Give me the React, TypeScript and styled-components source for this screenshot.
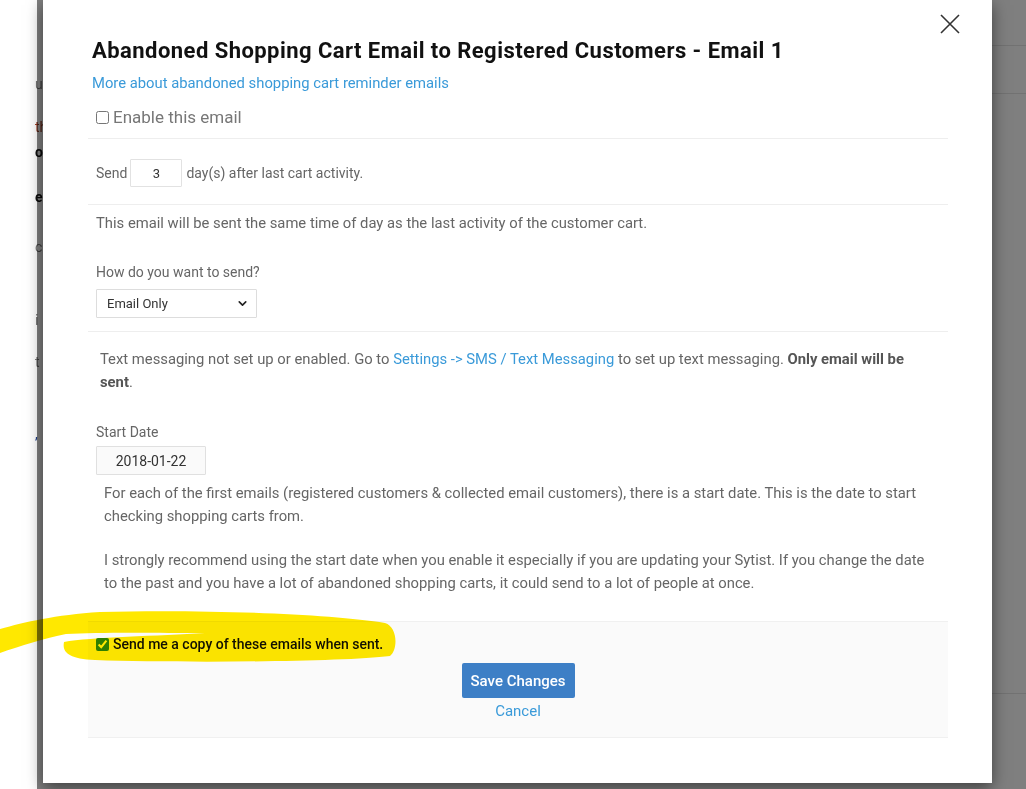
import React from "react";
import styled, { createGlobalStyle } from "styled-components";
import { ChevronDown } from "lucide-react";

const Global = createGlobalStyle`
  html, body { margin: 0; padding: 0; background: #fff; }
  body { font-family: Roboto, "Liberation Sans", Arial, sans-serif; }
  * { box-sizing: border-box; }
`;

const Root = styled.div`
  position: relative;
  width: 1026px;
  height: 789px;
  overflow: hidden;
  background: #fff;
`;

const BehindPage = styled.div`
  display: flex;
  flex-direction: column;
  width: 100%;
  height: 100%;
`;

const BehindLine = styled.div<{ $h: number; $rule?: boolean }>`
  position: relative;
  height: ${(p) => p.$h}px;
  display: flex;
  align-items: flex-end;
  padding-left: 35px;
  font-size: 14px;
  line-height: 20px;
  color: #777;
  &::after {
    content: "";
    display: ${(p) => (p.$rule ? "block" : "none")};
    position: absolute;
    left: 960px;
    right: 0;
    bottom: 0;
    height: 1px;
    background: #e4e4e4;
  }
`;

const Frag = styled.span<{ $tone?: "red" | "bold" | "gray" | "blue" }>`
  color: ${(p) =>
    p.$tone === "red" ? "#9a3b22" : p.$tone === "bold" ? "#111" : p.$tone === "blue" ? "#1f3f8a" : "#777"};
  font-weight: ${(p) => (p.$tone === "bold" ? 700 : 400)};
`;

const Overlay = styled.div`
  position: absolute;
  left: 37px;
  top: 0;
  right: 0;
  bottom: 0;
  background: rgba(0, 0, 0, 0.5);
`;

const Modal = styled.div`
  position: absolute;
  left: 43px;
  top: 0;
  width: 949px;
  height: 783px;
  background: #fff;
  box-shadow: 0 5px 15px rgba(0, 0, 0, 0.5);
  padding: 37px 44px 0 45px;
  display: flex;
  flex-direction: column;
`;

const Close = styled.button`
  position: absolute;
  top: 13px;
  right: 31px;
  width: 22px;
  height: 22px;
  padding: 0;
  border: 0;
  background: transparent;
  display: flex;
  align-items: center;
  justify-content: center;
`;

const Title = styled.h1`
  margin: 0 0 0 4px;
  font-size: 22px;
  line-height: 28px;
  font-weight: 700;
  letter-spacing: 0.45px;
  color: #111;
`;

const Link = styled.a`
  color: #3a9ad9;
  text-decoration: none;
`;

const HeaderLink = styled(Link)`
  display: block;
  margin: 8px 0 0 4px;
  font-size: 14.8px;
  line-height: 20px;
`;

const EnableRow = styled.label`
  display: flex;
  align-items: center;
  gap: 4px;
  padding: 12px 0 9px 8px;
  border-bottom: 1px solid #eee;
  font-size: 17px;
  line-height: 24px;
  color: #777;
`;

const Check = styled.input`
  width: 13px;
  height: 13px;
  margin: 0;
  accent-color: #2f8c12;
`;

const Section = styled.div<{ $pt: number; $pb: number; $rule?: boolean }>`
  padding: ${(p) => p.$pt}px 0 ${(p) => p.$pb}px 8px;
  border-bottom: ${(p) => (p.$rule ? "1px solid #eee" : "none")};
  display: flex;
  flex-direction: column;
  align-items: flex-start;
`;

const InlineRow = styled.div`
  display: flex;
  align-items: center;
  font-size: 14px;
  color: #666;
`;

const DaysInput = styled.input`
  width: 52px;
  height: 28px;
  margin: 0 4px 0 3px;
  border: 1px solid #e2e2e2;
  border-radius: 1px;
  text-align: center;
  font-family: Roboto, sans-serif;
  font-size: 13px;
  color: #333;
  background: #fff;
  outline: none;
`;

const Para = styled.p<{ $indent?: number; $mt?: number; $right?: number }>`
  margin: ${(p) => p.$mt ?? 0}px ${(p) => p.$right ?? 0}px 0 ${(p) => p.$indent ?? 0}px;
  font-size: 14.8px;
  line-height: 23px;
  color: #666;
`;

const Strong = styled.b`
  font-weight: 700;
  color: #555;
`;

const FieldLabel = styled.div<{ $mt: number }>`
  margin-top: ${(p) => p.$mt}px;
  font-size: 14px;
  line-height: 20px;
  color: #666;
`;

const SelectWrap = styled.div`
  position: relative;
  margin-top: 7px;
  width: 161px;
  height: 29px;
`;

const Select = styled.select`
  appearance: none;
  width: 100%;
  height: 100%;
  padding: 0 0 0 10px;
  border: 1px solid #ddd;
  border-radius: 1px;
  background: #fff;
  font-family: Roboto, sans-serif;
  font-size: 13px;
  color: #333;
  outline: none;
`;

const SelectArrow = styled.span`
  position: absolute;
  right: 8px;
  top: 8px;
  pointer-events: none;
  display: flex;
  color: #222;
`;

const DateInput = styled.input`
  margin-top: 4px;
  width: 110px;
  height: 29px;
  border: 1px solid #e0e0e0;
  border-radius: 1px;
  background: #fafafa;
  text-align: center;
  font-family: Roboto, sans-serif;
  font-size: 14px;
  color: #333;
  outline: none;
`;

const Footer = styled.div`
  margin-top: 26px;
  background: #fafafa;
  border-top: 1px solid #f0f0f0;
  border-bottom: 1px solid #f0f0f0;
  padding: 12px 0 16px 8px;
  display: flex;
  flex-direction: column;
`;

const CopyRow = styled.label`
  display: flex;
  align-items: center;
  gap: 4px;
  font-size: 14px;
  line-height: 20px;
  font-weight: 500;
  color: #111;
`;

const Actions = styled.div`
  margin-top: 9px;
  display: flex;
  flex-direction: column;
  align-items: center;
  gap: 3px;
  margin-left: -8px;
`;

const SaveButton = styled.button`
  width: 113px;
  height: 35px;
  border: 0;
  border-radius: 2px;
  background: #3d7fc6;
  color: #fff;
  font-family: Roboto, sans-serif;
  font-size: 15px;
  font-weight: 500;
`;

const CancelLink = styled(Link)`
  font-size: 15px;
  line-height: 20px;
`;

const Highlight = styled.svg`
  position: absolute;
  left: 0;
  top: 0;
  pointer-events: none;
  mix-blend-mode: multiply;
`;

export default function App() {
  return (
    <Root>
      <Global />
      <BehindPage>
        <BehindLine $h={46} $rule />
        <BehindLine $h={48} $rule>
          <Frag>u</Frag>
        </BehindLine>
        <BehindLine $h={43}>
          <Frag $tone="red">th</Frag>
        </BehindLine>
        <BehindLine $h={25}>
          <Frag $tone="bold">ot</Frag>
        </BehindLine>
        <BehindLine $h={45}>
          <Frag $tone="bold">e</Frag>
        </BehindLine>
        <BehindLine $h={50}>
          <Frag>c</Frag>
        </BehindLine>
        <BehindLine $h={73}>
          <Frag>i</Frag>
        </BehindLine>
        <BehindLine $h={42}>
          <Frag>t</Frag>
        </BehindLine>
        <BehindLine $h={72}>
          <Frag $tone="blue">,</Frag>
        </BehindLine>
        <BehindLine $h={250} $rule />
      </BehindPage>
      <Overlay />
      <Modal>
        <Close aria-label="Close">
          <svg width="22" height="22" viewBox="0 0 22 22">
            <path d="M2 2 L20 20 M20 2 L2 20" stroke="#333" strokeWidth="1.6" fill="none" />
          </svg>
        </Close>
        <Title>Abandoned Shopping Cart Email to Registered Customers - Email 1</Title>
        <HeaderLink href="#">More about abandoned shopping cart reminder emails</HeaderLink>
        <EnableRow>
          <Check type="checkbox" />
          Enable this email
        </EnableRow>
        <Section $pt={20} $pb={17} $rule>
          <InlineRow>
            Send
            <DaysInput defaultValue="3" />
            day(s) after last cart activity.
          </InlineRow>
        </Section>
        <Section $pt={7} $pb={13} $rule>
          <Para>This email will be sent the same time of day as the last activity of the customer cart.</Para>
          <FieldLabel $mt={27}>How do you want to send?</FieldLabel>
          <SelectWrap>
            <Select defaultValue="email">
              <option value="email">Email Only</option>
              <option value="sms">Email &amp; Text</option>
            </Select>
            <SelectArrow>
              <ChevronDown size={13} strokeWidth={3} />
            </SelectArrow>
          </SelectWrap>
        </Section>
        <Section $pt={16} $pb={0}>
          <Para $indent={4} $right={12}>
            Text messaging not set up or enabled. Go to <Link href="#">Settings -&gt; SMS / Text Messaging</Link> to set
            up text messaging. <Strong>Only email will be sent</Strong>.
          </Para>
          <FieldLabel $mt={28}>Start Date</FieldLabel>
          <DateInput defaultValue="2018-01-22" />
          <Para $indent={8} $mt={7} $right={8}>
            For each of the first emails (registered customers &amp; collected email customers), there is a start date.
            This is the date to start checking shopping carts from.
          </Para>
          <Para $indent={8} $mt={21} $right={8}>
            I strongly recommend using the start date when you enable it especially if you are updating your Sytist. If
            you change the date to the past and you have a lot of abandoned shopping carts, it could send to a lot of
            people at once.
          </Para>
        </Section>
        <Footer>
          <CopyRow>
            <Check type="checkbox" defaultChecked />
            Send me a copy of these emails when sent.
          </CopyRow>
          <Actions>
            <SaveButton>Save Changes</SaveButton>
            <CancelLink href="#">Cancel</CancelLink>
          </Actions>
        </Footer>
      </Modal>
      <Highlight width="1026" height="789" viewBox="0 0 1026 789">
        <path
          fill="#ffe800"
          d="M0,629 C25,622 55,615 100,612 C200,609 330,614 385,623 C398,627 398,650 390,656 C340,662 180,663 95,660 C68,659 62,652 64,642 C90,637 160,636 205,633 C160,633 100,632 66,634 C45,638 20,646 0,653 Z"
        />
      </Highlight>
    </Root>
  );
}
